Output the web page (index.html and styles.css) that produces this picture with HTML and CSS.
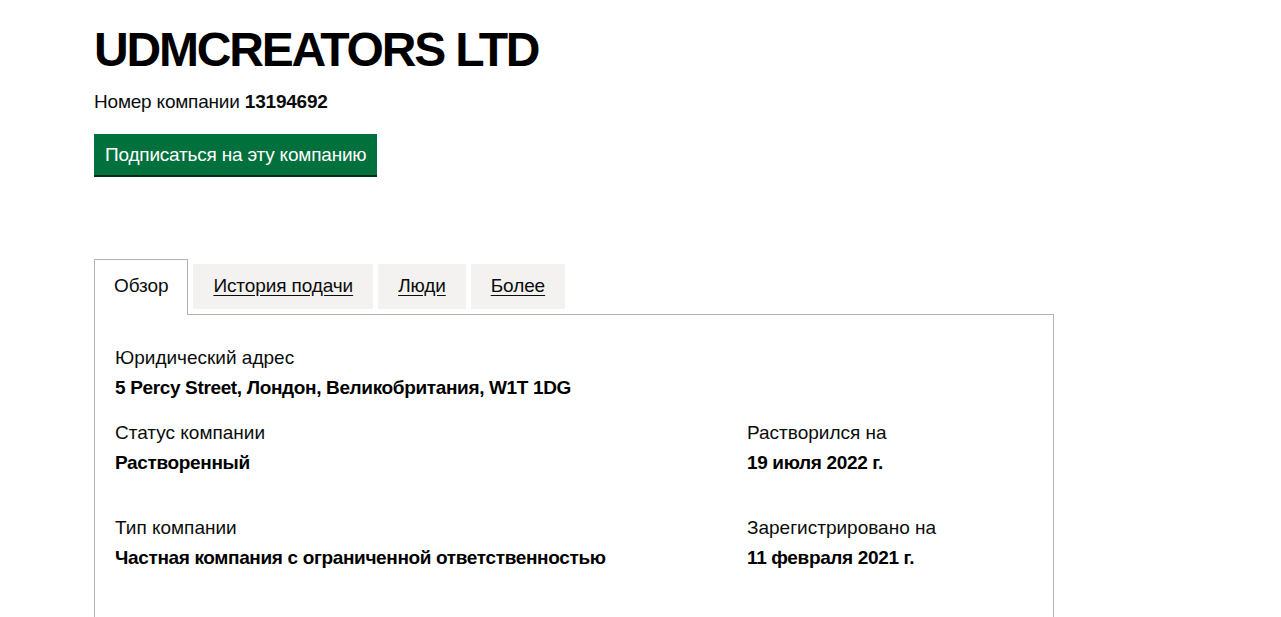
FILE: index.html
```html
<!DOCTYPE html>
<html lang="ru">
<head>
<meta charset="utf-8">
<title>UDMCREATORS LTD</title>
<link rel="stylesheet" href="styles.css">
</head>
<body>
<main class="page">
  <h1 class="title">UDMCREATORS LTD</h1>
  <p class="number">Номер компании <strong>13194692</strong></p>
  <a class="button" href="#">Подписаться на эту компанию</a>

  <div class="tabs">
    <ul class="tab-list">
      <li class="tab tab-selected"><span>Обзор</span></li>
      <li class="tab"><a href="#">История подачи</a></li>
      <li class="tab"><a href="#">Люди</a></li>
      <li class="tab"><a href="#">Более</a></li>
    </ul>
    <div class="panel">
      <dl class="field field-address">
        <dt>Юридический адрес</dt>
        <dd>5 Percy Street, Лондон, Великобритания, W1T 1DG</dd>
      </dl>
      <div class="grid">
        <dl class="field">
          <dt>Статус компании</dt>
          <dd>Растворенный</dd>
        </dl>
        <dl class="field">
          <dt>Растворился на</dt>
          <dd>19 июля 2022 г.</dd>
        </dl>
        <dl class="field">
          <dt>Тип компании</dt>
          <dd>Частная компания с ограниченной ответственностью</dd>
        </dl>
        <dl class="field">
          <dt>Зарегистрировано на</dt>
          <dd>11 февраля 2021 г.</dd>
        </dl>
      </div>
    </div>
  </div>
</main>
</body>
</html>
```

FILE: styles.css
```css
* { box-sizing: border-box; }
html, body { margin: 0; padding: 0; background: #fff; }
body {
  font-family: "Liberation Sans", Arial, sans-serif;
  color: #0b0c0c;
}
.page {
  width: 960px;
  margin-left: 94px;
  padding-top: 24px;
}
.title {
  margin: 0;
  font-size: 48px;
  line-height: 52px;
  font-weight: 700;
  letter-spacing: -2.2px;
  color: #000;
}
.number {
  margin: 14px 0 0;
  font-size: 19px;
  line-height: 24px;
  letter-spacing: -0.2px;
}
.number strong { font-weight: 700; }
.button {
  display: inline-block;
  margin-top: 20px;
  padding: 9px 11px 9px;
  background: #00703c;
  color: #fff;
  text-decoration: none;
  font-size: 19px;
  line-height: 23px;
  letter-spacing: -0.2px;
  box-shadow: 0 2px 0 #002d18;
}
.tabs { margin-top: 84px; }
.tab-list {
  list-style: none;
  margin: 0;
  padding: 0;
  display: flex;
  align-items: flex-start;
  gap: 5px;
}
.tab {
  background: #f3f2f1;
  margin-top: 5px;
  padding: 10px 20px 11px;
  font-size: 19px;
  line-height: 24px;
  letter-spacing: -0.1px;
}
.tab a { color: #0b0c0c; text-decoration: underline; text-underline-offset: 3px; }
.tab-selected {
  margin-top: 0;
  background: #fff;
  border: 1px solid #b1b4b6;
  border-bottom: 0;
  padding: 14px 19px 17px;
  margin-bottom: -1px;
  position: relative;
  z-index: 1;
}
.panel {
  border: 1px solid #b1b4b6;
  padding: 30px 20px 80px;
}
.field { margin: 0; }
.field dt { font-size: 19px; line-height: 25px; }
.field dd {
  margin: 5px 0 0;
  font-size: 19px;
  line-height: 25px;
  font-weight: 700;
  letter-spacing: -0.35px;
  color: #000;
}
.field-address { margin-bottom: 20px; }
.grid {
  display: grid;
  grid-template-columns: 632px 1fr;
  row-gap: 40px;
}
```
